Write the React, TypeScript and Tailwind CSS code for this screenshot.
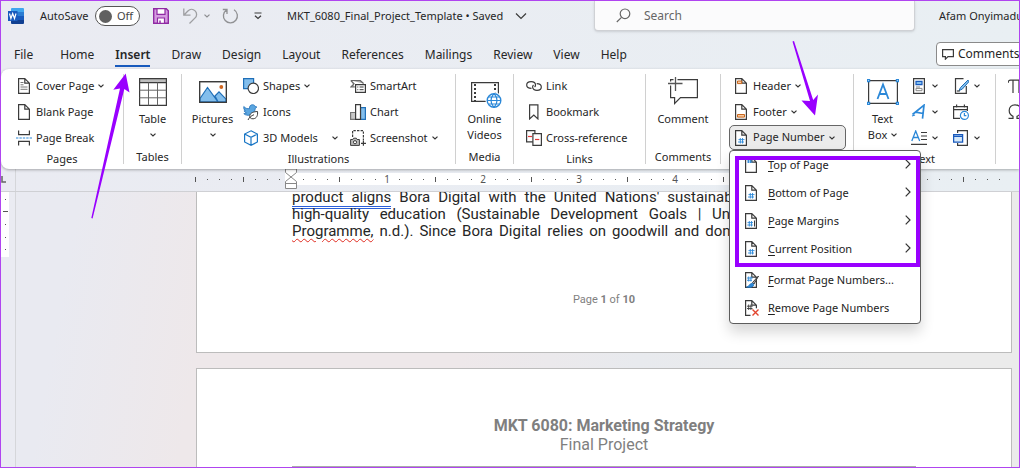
import type { ReactNode } from "react";

const INK = "#3b3b3b";
const BLUE = "#2b88d8";

function Icon({ w = 16, h = 16, children }: { w?: number; h?: number; children: ReactNode }) {
  return (
    <svg width={w} height={h} viewBox={`0 0 ${w} ${h}`} fill="none" stroke={INK} strokeWidth="1.2" className="shrink-0" aria-hidden="true">
      {children}
    </svg>
  );
}

function Chevron() {
  return (
    <svg width="6" height="4" viewBox="0 0 6 4" fill="none" stroke="#333" strokeWidth="1.2" className="shrink-0" aria-hidden="true">
      <path d="M.5.6 3 3 5.5.6" />
    </svg>
  );
}

const sheet = <path d="M2.6.6h6.2l4.6 4.6v10.2H2.6zM8.8.6v4.6h4.6" fill="#fff" />;
const hash = <path d="M7.300 8v5.500M9.500 8v5.500M5.500 9.600h6M5 12h6" stroke={BLUE} strokeWidth=".9" />;

const icons = {
  cover: <Icon>{sheet}<path d="M4.5 4.5h3M4.5 6.8h3M4.5 9h7M4.5 11.3h7" stroke="#777" strokeWidth="1" /></Icon>,
  blank: <Icon>{sheet}</Icon>,
  pageBreak: (
    <Icon>
      <path d="M2.6.5v4.1h10.8V.5M2.6 15.5v-4.1h10.8v4.1" />
      <path d="M0 8h16" stroke={BLUE} strokeDasharray="2.4 1" />
    </Icon>
  ),
  shapes: (
    <Icon>
      <path d="M.6.6h10v10h-10z" fill="#83beec" stroke="#1f6fb8" />
      <circle cx="10.3" cy="10.3" r="5.2" fill="#fff" />
    </Icon>
  ),
  bird: (
    <Icon>
      <path d="M.8 2.5c1.800 2 3.600 2.400 5.700 2.100C6.200 2 7.700.7 9.500.7c1.400 0 2.300.7 2.700 1.800l1.700.5-1.600 1.300C12 8 9.500 11.500 5 11.300 3 11.200 1.500 10.500.8 9.600c1 .1 1.900-.1 2.600-.6C2 8.500 1.300 7.600 1.200 6.700l1.200.1C1 5.800.5 4.200.8 2.500z" fill="#5ba6e0" stroke="#1f6fb8" strokeWidth=".8" />
      <path d="M14.500 7.500c.5 4-.8 7-4.400 7.300-2.600.2-3.700-1.500-3.300-3.200.5-2.800 3.700-3.900 7.700-4.100zM5 16c1.200-2.600 3.300-4.300 6-5.300" fill="#fff" strokeWidth="1" />
    </Icon>
  ),
  cube: (
    <Icon>
      <path d="M8 .8 14.400 4v8L8 15.300 1.600 12V4zM1.600 4 8 7.300 14.400 4M8 7.300v8" stroke="#1976c5" fill="#fff" />
    </Icon>
  ),
  smartArt: (
    <Icon>
      <path d="M.8 2.500h9.500l3.300 3M.8 2.500 4 5.800.8 9h4" fill="#aaa" stroke="#666" />
      <path d="M5.600 6.600h9.800v7.800H5.600z" fill="#fff" />
      <path d="M7.300 9h1M9.600 9h4M7.300 11.700h1M9.600 11.700h4" strokeWidth="1" />
    </Icon>
  ),
  chart: (
    <Icon>
      <path d="M.6 8.500h5v6.900h-5z" fill="#c8c8c8" stroke="#777" />
      <path d="M10.500 3.600h4.900v11.800h-4.900z" fill="#83beec" stroke="#1f6fb8" />
      <path d="M5.600.6h4.900v14.800H5.600z" fill="#fff" />
    </Icon>
  ),
  screenshot: (
    <Icon>
      <path d="M2.600 7V.6h10.800v9.900" strokeDasharray="2.400 1.200" />
      <path d="M.6 9.500h2.200l.8-1.300h2.700l.8 1.300h2.300v5.900H.6z" fill="#bbb" strokeWidth="1" />
      <circle cx="5" cy="12.200" r="1.600" fill="#fff" strokeWidth="1" />
      <path d="M13.400 10.800v5M11 13.300h5" />
    </Icon>
  ),
  link: (
    <Icon>
      <path d="M5.500 10.400C2.600 10.400.7 9 .7 7s1.900-3.400 4.400-3.400S9.500 5 9.500 7c0 .8-.3 1.500-.9 2M10.700 5.600c2.800 0 4.600 1.400 4.600 3.400s-1.800 3.400-4.300 3.400S6.600 11 6.600 9c0-.8.300-1.400.9-2" />
    </Icon>
  ),
  bookmark: <Icon><path d="M3.600.8h8.300v14.100L7.800 11l-4.200 3.900z" /></Icon>,
  crossRef: (
    <Icon>
      <path d="M.6.6h8.300v11.300H.6z" fill="#fff" />
      <path d="M2 6.500h4" stroke="#e23a3a" />
      <path d="M6.900 3.600h8.500v11.800H6.900z" fill="#fff" />
      <path d="M9 9.500h4.300" stroke="#e23a3a" />
    </Icon>
  ),
  header: <Icon>{sheet}<path d="M4.500 3h4.200v2.600H4.500z" fill="#f6c9a0" stroke="#c8661c" strokeWidth="1" /></Icon>,
  footer: <Icon>{sheet}<path d="M4.500 10.500h7v2.600h-7z" fill="#f6c9a0" stroke="#c8661c" strokeWidth="1" /></Icon>,
  pageNumber: <Icon>{sheet}{hash}</Icon>,
  topOfPage: (
    <Icon>
      {sheet}
      <path d="M5.500 1.500v4.500M7.500 1.500v4.500M4 3h5.500M4 5h5.500" stroke={BLUE} strokeWidth=".9" />
    </Icon>
  ),
  margins: (
    <Icon>
      {sheet}
      <path d="M6.300 8v5.500M8.500 8v5.500M4.500 9.600h5.500M4.300 12h5.500" stroke={BLUE} strokeWidth=".9" />
      <path d="M11.500 7.500v6" strokeWidth="1" />
    </Icon>
  ),
  format: (
    <Icon>
      {sheet}
      <path d="M5.700 4.500v5M7.900 4.500v5M4 6h5.700M4 8.300h5" stroke={BLUE} strokeWidth=".9" />
      <path d="m15.500 4-6 6.500 1.500 1.500z" fill="#aaa" strokeWidth="1" />
      <path d="M3.500 15c2.500 0 3-3.800 5.700-3.800 1.800.2 2 2 .8 3-1.400 1.200-4 1.600-6.500.8z" fill={BLUE} stroke="#1f6fb8" strokeWidth=".8" />
    </Icon>
  ),
  remove: (
    <Icon>
      <path d="M7.500 15.400H2.600V.6h6.200l4.600 4.600v3M8.800.6v4.600h4.600" fill="#fff" />
      <path d="M5.700 4.500v5.500M7.900 4.500v5.500M4 6.200h5.700M4 8.500h5.500" strokeWidth=".9" />
      <path d="m9.500 9.500 6 6m0-6-6 6" stroke="#e2452f" strokeWidth="1.400" />
    </Icon>
  ),
  quickParts: (
    <Icon>
      <path d="M2.600.6h10.800v14.800H2.600z" fill="#fff" />
      <path d="M5 3.300h6v3.400H5z" fill="#83beec" stroke="#185abd" />
      <path d="M5 9h4M5 10.400h6v2.300H5z" stroke="#888" strokeWidth="1" />
    </Icon>
  ),
  wordArt: (
    <Icon>
      <path d="M1.500 10.500 13 1.200l-1.500 13.500M4.800 8.200l7.300 1.300" stroke="#2b88d8" strokeWidth="1.700" />
      <path d="m1 12 3-1" stroke="#2b88d8" />
    </Icon>
  ),
  dropCap: (
    <Icon>
      <path d="M.8 11 4.700 1l4 10M2.200 7.500h5" stroke={BLUE} strokeWidth="1.300" />
      <path d="M10 2.500h6M10 6h6M10 9.500h6M0 14.400h16" />
    </Icon>
  ),
  signature: (
    <Icon>
      <path d="M10.500.6h-8v14.800h10.800V8" fill="#fff" />
      <path d="m15 2-7.500 7.500-1.500 3 3.200-1.300 6.600-7.400z" fill="#83beec" stroke="#1f6fb8" strokeWidth="1" />
      <path d="M3.800 13h3" />
    </Icon>
  ),
  dateTime: (
    <Icon>
      <path d="M7 14.400H.6V2.600h13.800V7M.6 5.600h13.800M3.600.5v3M11.400.5v3" />
      <circle cx="11.400" cy="11.400" r="4" fill="#fff" stroke={BLUE} />
      <path d="M11.400 9v2.600h2" stroke={BLUE} />
    </Icon>
  ),
  object: (
    <Icon>
      <path d="M4.600 3V.6h9.800v14.800H4.600V13" fill="#fff" />
      <path d="M.6 4.600h9v7.600h-9zM.6 6.400h9" fill="#d6e9f9" stroke="#185abd" strokeWidth="1.300" />
    </Icon>
  ),
};

function Separator() {
  return <div className="my-px w-px shrink-0 bg-[#d0d0d0]" />;
}

function Group({ label, className, children }: { label: string; className: string; children: ReactNode }) {
  return (
    <section aria-label={label} className={`flex shrink-0 flex-col ${className}`}>
      <div className="flex h-[78px]">{children}</div>
      <div className="text-center leading-4">{label}</div>
    </section>
  );
}

function Tool({ icon, label, arrow, spread }: { icon: ReactNode; label: string; arrow?: boolean; spread?: boolean }) {
  return (
    <button className={`flex h-[26px] items-center gap-1 ${spread ? "w-[95px]" : ""}`}>
      {icon}
      <span className={spread ? "flex-1 text-left" : ""}>{label}</span>
      {arrow && <Chevron />}
    </button>
  );
}

function BigTool({ icon, lines, arrow }: { icon: ReactNode; lines: string[]; arrow?: "below" | "beside" }) {
  return (
    <button className="flex flex-1 flex-col items-center">
      <span className="flex h-[38px] items-center">{icon}</span>
      {lines.map((line, i) => (
        <span key={line} className="flex items-center gap-1 leading-4">
          {line}
          {arrow === "beside" && i === lines.length - 1 && <Chevron />}
        </span>
      ))}
      {arrow === "below" && <span className="flex h-4 items-center"><Chevron /></span>}
    </button>
  );
}

function IconTool({ icon, label, arrow = true }: { icon: ReactNode; label: string; arrow?: boolean }) {
  return (
    <button aria-label={label} className="flex h-[26px] items-center gap-[5px]">
      {icon}
      {arrow && <Chevron />}
    </button>
  );
}

function MenuItem({ icon, label, submenu }: { icon: ReactNode; label: string; submenu?: boolean }) {
  return (
    <button role="menuitem" className="flex h-7 w-full items-center gap-2 pr-[9px] pl-[13px] text-left text-[#222]">
      {icon}
      <span className="flex-1 pl-px">
        <span className="underline underline-offset-2">{label[0]}</span>
        {label.slice(1)}
      </span>
      {submenu && (
        <svg width="6" height="10" viewBox="0 0 6 10" fill="none" stroke="#333" strokeWidth="1.200" className="mb-0.5" aria-hidden="true">
          <path d="m.7.7 4.300 4.300L.7 9.300" />
        </svg>
      )}
    </button>
  );
}

function TitleBar() {
  return (
    <div className="flex h-[30px] items-center text-[11px]">
      <div className="flex w-[278px] shrink-0 items-center pl-[7px]">
        <svg width="16" height="16" viewBox="0 0 16 16" aria-label="Word" className="shrink-0">
          <path d="M4 0h11a1 1 0 0 1 1 1v3H3V1a1 1 0 0 1 1-1z" fill="#41a5ee" />
          <path d="M3 4h13v4H3z" fill="#2b7cd3" />
          <path d="M3 8h13v4H3z" fill="#185abd" />
          <path d="M3 12h13v3a1 1 0 0 1-1 1H4a1 1 0 0 1-1-1z" fill="#103f91" />
          <path d="M0 3h9.500v10H0z" fill="#185abd" />
          <path d="m1.500 5.500 1.400 5 1.800-5 1.800 5L8 5.500" fill="none" stroke="#fff" strokeWidth="1.200" />
        </svg>
        <label htmlFor="autosave" className="w-[55px] pl-4 whitespace-nowrap">AutoSave</label>
        <span className="relative ml-4 flex h-5 w-[45px] items-center rounded-full border border-[#555] bg-white pl-[3px]">
          <input id="autosave" type="checkbox" className="absolute inset-0 appearance-none" />
          <span className="size-[13px] rounded-full bg-[#606060]" />
          <span className="pl-[5px] text-[#444]">Off</span>
        </span>
        <button aria-label="Save" className="ml-[13px]">
          <Icon>
            <path d="M.7.7h12.600l2 2v12.600H.7z" fill="#d59be0" stroke="#8f2aa3" strokeWidth="1.400" />
            <path d="M4 .7h8v5.600H4zM4.500 10h7v5.300h-7z" fill="#fff" stroke="#8f2aa3" />
            <path d="M7 12.500v2.800" stroke="#8f2aa3" strokeWidth="1.400" />
          </Icon>
        </button>
        <button aria-label="Undo" className="ml-[13px] flex items-center gap-1 opacity-50">
          <Icon w={18}>
            <path d="M1.800.5v6.700h6.700M1.800 7.200 5.900 3c2.100-2.100 5.200-2.100 7.200-.1s2 5 0 7L7.500 15.500" stroke="#555" strokeWidth="1.300" />
          </Icon>
          <Chevron />
        </button>
        <button aria-label="Redo" className="ml-3 opacity-60">
          <Icon w={18}>
            <path d="M4.500 2A7 7 0 1 0 12 1.800M5 6V1.500H.8" stroke="#555" strokeWidth="1.300" />
          </Icon>
        </button>
        <button aria-label="Customize toolbar" className="ml-[14px]">
          <Icon w={8} h={8}><path d="M.5 1h7M1 3.700l3 2.800 3-2.800" /></Icon>
        </button>
      </div>
      <button className="ml-2 flex w-[307px] shrink-0 items-center gap-3 whitespace-nowrap">
        MKT_6080_Final_Project_Template • Saved
        <Icon w={12} h={8}><path d="m1 1.500 5 5 5-5" /></Icon>
      </button>
      <label className="flex h-full min-w-0 flex-1 items-center rounded-b border border-t-0 border-[#cfd1d5] bg-[#fbfbfc] pl-[21px] shadow-sm">
        <Icon w={15} h={15}>
          <circle cx="9" cy="5.800" r="4.800" stroke="#666" />
          <path d="M5.500 9.300.8 14" stroke="#666" />
        </Icon>
        <input aria-label="Search" placeholder="Search" className="ml-[13px] w-full min-w-0 bg-transparent text-[12px] outline-none placeholder:text-[#666]" />
      </label>
      <div className="w-[104px] shrink-0 overflow-hidden pl-6 whitespace-nowrap">Afam Onyimadu</div>
    </div>
  );
}

const tabs = ["Home", "Insert", "Draw", "Design", "Layout", "References", "Mailings", "Review", "View", "Help"];

function Tabs() {
  return (
    <div className="flex h-[38px] items-center justify-between pl-[13px] text-[12px]">
      <nav className="flex items-center gap-[21px] pt-[9px]">
        <a href="#file" className="mr-[6px]">File</a>
        {tabs.map((t) => (
          <a
            key={t}
            href={`#${t.toLowerCase()}`}
            className={t === "Insert" ? "-mb-[3px] border-b-2 border-[#185abd] pb-px font-semibold" : ""}
          >
            {t}
          </a>
        ))}
      </nav>
      <div className="w-[83px] overflow-hidden pt-[9px] pb-px">
        <button className="flex h-6 w-[92px] items-center gap-1 rounded-[4px] border border-[#8a8a8a] bg-white pl-[5px]">
          <Icon w={12} h={12}><path d="M.6 1.600h10.800v7H6l-2.600 2.600V8.600H.6z" /></Icon>
          Comments
        </button>
      </div>
    </div>
  );
}

function PageNumberMenu() {
  return (
    <div role="menu" className="absolute top-full left-0 z-20 w-[192px] rounded-[4px] border border-[#5c5c5c] bg-white pb-px shadow-[0_8px_14px_rgba(0,0,0,0.16)]">
      <MenuItem icon={icons.topOfPage} label="Top of Page" submenu />
      <MenuItem icon={icons.pageNumber} label="Bottom of Page" submenu />
      <MenuItem icon={icons.margins} label="Page Margins" submenu />
      <MenuItem icon={icons.pageNumber} label="Current Position" submenu />
      <div className="mx-2 my-px h-px bg-[#ddd]" />
      <MenuItem icon={icons.format} label="Format Page Numbers..." />
      <MenuItem icon={icons.remove} label="Remove Page Numbers" />
      <div className="pointer-events-none absolute top-[5px] right-0 left-[5px] h-[111px] border-4 border-[#9900ff]" />
    </div>
  );
}

function Ribbon() {
  return (
    <div className="relative z-10 flex h-[100px] rounded-l-lg bg-white pt-1 pb-1 whitespace-nowrap shadow-[0_1px_3px_rgba(0,0,0,0.3)]">
      <Group label="Pages" className="w-[122px]">
        <div className="pl-[15px]">
          <Tool icon={icons.cover} label="Cover Page" arrow />
          <Tool icon={icons.blank} label="Blank Page" />
          <Tool icon={icons.pageBreak} label="Page Break" />
        </div>
      </Group>
      <Separator />
      <Group label="Tables" className="w-[57px]">
        <BigTool
          lines={["Table"]}
          arrow="below"
          icon={
            <Icon w={28} h={28}>
              <path d="M.6.6h26.800v26.800H.6z" fill="#fff" />
              <path d="M.6.6h26.800v4H.6z" fill="#bdbdbd" />
              <path d="M.6 12.200h26.800M.6 19.800h26.800M9.500 4.600v22.800M18.500 4.600v22.800" stroke="#666" strokeWidth="1" />
            </Icon>
          }
        />
      </Group>
      <Separator />
      <Group label="Illustrations" className="w-[273px]">
        <div className="flex w-[61px]">
          <BigTool
            lines={["Pictures"]}
            arrow="below"
            icon={
              <Icon w={28} h={22}>
                <path d="M.6.6h26.800v20.800H.6z" fill="#fff" />
                <path d="M1 17.500 8.500 6.500 19 20.800H1zM16 15l4-4.200 7 7.400v2.600h-8z" fill="#83beec" stroke="#1f6fb8" />
                <circle cx="22.300" cy="6" r="1.900" fill="#d0661f" stroke="none" />
                <path d="M.6.6h26.800v20.800H.6z" />
              </Icon>
            }
          />
        </div>
        <div className="w-[107px]">
          <Tool icon={icons.shapes} label="Shapes" arrow />
          <Tool icon={icons.bird} label="Icons" />
          <Tool icon={icons.cube} label="3D Models" arrow spread />
        </div>
        <div>
          <Tool icon={icons.smartArt} label="SmartArt" />
          <Tool icon={icons.chart} label="Chart" />
          <Tool icon={icons.screenshot} label="Screenshot" arrow />
        </div>
      </Group>
      <Separator />
      <Group label="Media" className="w-[57px]">
        <BigTool
          lines={["Online", "Videos"]}
          icon={
            <Icon w={34} h={32}>
              <path d="M3.600 6.600h26.800v18.800H3.600z" fill="#fff" />
              <path d="M7 8v17M27 8v10" strokeDasharray="2 2" strokeWidth="2" />
              <circle cx="26" cy="24.500" r="8.500" fill="#fff" stroke="none" />
              <circle cx="26" cy="24.500" r="6.800" stroke={BLUE} strokeWidth="1.400" />
              <path d="M19.200 24.500h13.600M20.500 21h11M20.500 28h11M26 17.700c-4 4-4 9.600 0 13.600M26 17.700c4 4 4 9.600 0 13.600" stroke={BLUE} />
            </Icon>
          }
        />
      </Group>
      <Separator />
      <Group label="Links" className="w-[131px]">
        <div className="pl-3">
          <Tool icon={icons.link} label="Link" />
          <Tool icon={icons.bookmark} label="Bookmark" />
          <Tool icon={icons.crossRef} label="Cross-reference" />
        </div>
      </Group>
      <Separator />
      <Group label="Comments" className="w-[74px]">
        <BigTool
          lines={["Comment"]}
          icon={
            <Icon w={30} h={30}>
              <path d="M2.600 2.600h26.800v18H12.500L6.600 26.500v-5.900h-4z" fill="#fff" />
              <path d="M7.500 0v12M0 6.500h13" stroke="#fff" strokeWidth="4" />
              <path d="M7.500 0v14M0 6.500h14.500" stroke="#555" strokeWidth="1.300" />
            </Icon>
          }
        />
      </Group>
      <Separator />
      <Group label="Header & Footer" className="w-[132px]">
        <div className="pl-2">
          <div className="pl-1">
            <Tool icon={icons.header} label="Header" arrow />
            <Tool icon={icons.footer} label="Footer" arrow />
          </div>
          <div className="relative">
            <button aria-haspopup="menu" aria-expanded="true" className="flex h-[25px] w-[117px] items-center gap-1 rounded-[5px] border border-[#666] bg-[#ebebeb] pl-[3px]">
              {icons.pageNumber}
              Page Number
              <Chevron />
            </button>
            <PageNumberMenu />
          </div>
        </div>
      </Group>
      <Separator />
      <Group label="Text" className="w-[141px]">
        <div className="flex w-[57px]">
          <BigTool
            lines={["Text", "Box"]}
            arrow="beside"
            icon={
              <Icon w={32} h={26}>
                <path d="M1.600 1.600h28.800v22.800H1.600z" fill="#fff" />
                <path d="M.6.6h2v2h-2zM29.400.6h2v2h-2zM.6 23.400h2v2h-2zM29.400 23.400h2v2h-2z" fill="#fff" stroke={BLUE} />
                <path d="m10.500 20 5.500-14.500L21.500 20M12.300 15h7.400" stroke={BLUE} strokeWidth="1.800" />
              </Icon>
            }
          />
        </div>
        <div className="w-[42px]">
          <IconTool icon={icons.quickParts} label="Quick Parts" />
          <IconTool icon={icons.wordArt} label="WordArt" />
          <IconTool icon={icons.dropCap} label="Drop Cap" />
        </div>
        <div>
          <IconTool icon={icons.signature} label="Signature Line" />
          <IconTool icon={icons.dateTime} label="Date and Time" arrow={false} />
          <IconTool icon={icons.object} label="Object" />
        </div>
      </Group>
      <Separator />
      <div className="min-w-0 flex-1 overflow-hidden pl-3">
        <IconTool icon={<Icon><path d="M0 5c0-2 1-2.800 2.500-2.800H16M5 2.200V15M11 2.200V15" /></Icon>} label="Equation" arrow={false} />
        <IconTool icon={<Icon><path d="M.5 14.400H5v-2C2.300 11 1.200 9 1.200 6.500 1.200 3 3.500.8 7 .8s6 2.200 6 5.700c0 2.500-1.300 4.500-4 5.900v2h5" /></Icon>} label="Symbol" arrow={false} />
      </div>
    </div>
  );
}

const rulerCells = Array.from({ length: 68 }, (_, i) => i - 8);

function Ruler() {
  return (
    <div className="flex h-[23px] overflow-hidden border-b border-[#cfd0d4]">
      <div className="flex w-[14px] shrink-0 items-center">
        <Icon w={6} h={8}><path d="M1 0v6h4" strokeWidth="1.500" stroke="#666" /></Icon>
      </div>
      <div className="flex shrink-0 border-l border-[#d5d6da] pt-1 pl-[173px]">
        {rulerCells.map((n) => {
          const inText = n >= 0 && n <= 51;
          const inch = n > 0 && n < 52 && n % 8 === 0;
          return (
            <div key={n} className={`flex h-3 w-3 items-center justify-center text-[10px] leading-3 text-[#555] ${inText ? "bg-white" : ""}`}>
              {inch ? n / 8 : n === 0 ? (
                <svg width="12" height="22" viewBox="0 0 12 22" fill="#fff" stroke="#888" className="z-[1] shrink-0" aria-hidden="true">
                  <path d="M.5 1v3.500L6 9l5.500-4.500V1zM6 9 .5 13.500v7h11v-7zM.5 15.500h11" />
                </svg>
              ) : (
                <span className={n % 4 === 0 ? "h-[5px] w-px bg-[#555]" : "h-px w-px bg-[#555]"} />
              )}
            </div>
          );
        })}
      </div>
    </div>
  );
}

function Line({ children }: { children: ReactNode }) {
  return <span className="block text-justify whitespace-nowrap [text-align-last:justify]">{children}</span>;
}

function DocumentArea() {
  return (
    <div className="flex flex-1 overflow-hidden">
      <div className="w-[14px] shrink-0">
        <div className="flex h-[65px] w-2 flex-col items-center justify-around bg-white py-px">
          {[0, 1, 2, 3, 4].map((n) => (
            <span key={n} className={n === 1 ? "h-px w-[5px] bg-[#555]" : "h-px w-px bg-[#555]"} />
          ))}
        </div>
      </div>
      <div className="flex-1 border-l border-[#d5d6da] bg-[linear-gradient(100deg,#e9eaf1_6%,#eee8ea_20%,#eee8ea_45%,#e8eaee_62%,#ebebeb_85%)] pr-[7px] pl-[180px]">
        <article className="h-[161px] overflow-hidden border border-t-0 border-[#bcbcbc] bg-white px-[95px] font-[Roboto,sans-serif] text-[#262626]">
          <p className="-mt-[3px] text-[15px] leading-[17px]">
            <Line>
              <span className="border-b-3 border-double border-[#2b5fd9]">product aligns</span> Bora Digital with the United Nations' sustainable development goals and
            </Line>
            <Line>high-quality education (Sustainable Development Goals | United Nations Development</Line>
            <Line>
              <span className="underline decoration-[#e02b20] decoration-wavy decoration-1 underline-offset-2">Programme,</span> n.d.). Since Bora Digital relies on goodwill and donations, it must maintain its
            </Line>
          </p>
          <p className="pt-[52px] text-center text-[11px] leading-4 text-[#7f7f7f]">
            Page <b>1</b> of <b>10</b>
          </p>
        </article>
        <article className="mt-[15px] h-[120px] border border-[#bcbcbc] bg-white px-[95px] pt-[47px] text-center font-[Roboto,sans-serif] text-[16px] leading-[19px] text-[#7f7f7f]">
          <h1 className="font-bold">MKT 6080: Marketing Strategy</h1>
          <p className="border-b border-[#aaa] pb-3">Final Project</p>
        </article>
      </div>
    </div>
  );
}

function Arrows() {
  return (
    <svg width="1020" height="230" viewBox="0 0 1020 230" className="pointer-events-none absolute -top-px -left-px z-30" fill="#9900ff" aria-hidden="true">
      <path d="M91.300 218 120 88.500l-6.700 1.200L125.700 73.500l3.800 19-5.200-3.500L92.600 218.500z" />
      <path d="m792.500 41.500 17.500 59.500-8.500-.5L815 115.500l3-21-4.800 5.500L794 41z" />
    </svg>
  );
}

export default function App() {
  return (
    <div className="relative flex h-screen flex-col overflow-hidden border border-[#b044f0] bg-linear-to-r from-[#eaebf2] to-[#e9eff3] font-['Noto_Sans',sans-serif] text-[11px] text-[#262626]">
      <TitleBar />
      <Tabs />
      <Ribbon />
      <Ruler />
      <DocumentArea />
      <Arrows />
    </div>
  );
}
